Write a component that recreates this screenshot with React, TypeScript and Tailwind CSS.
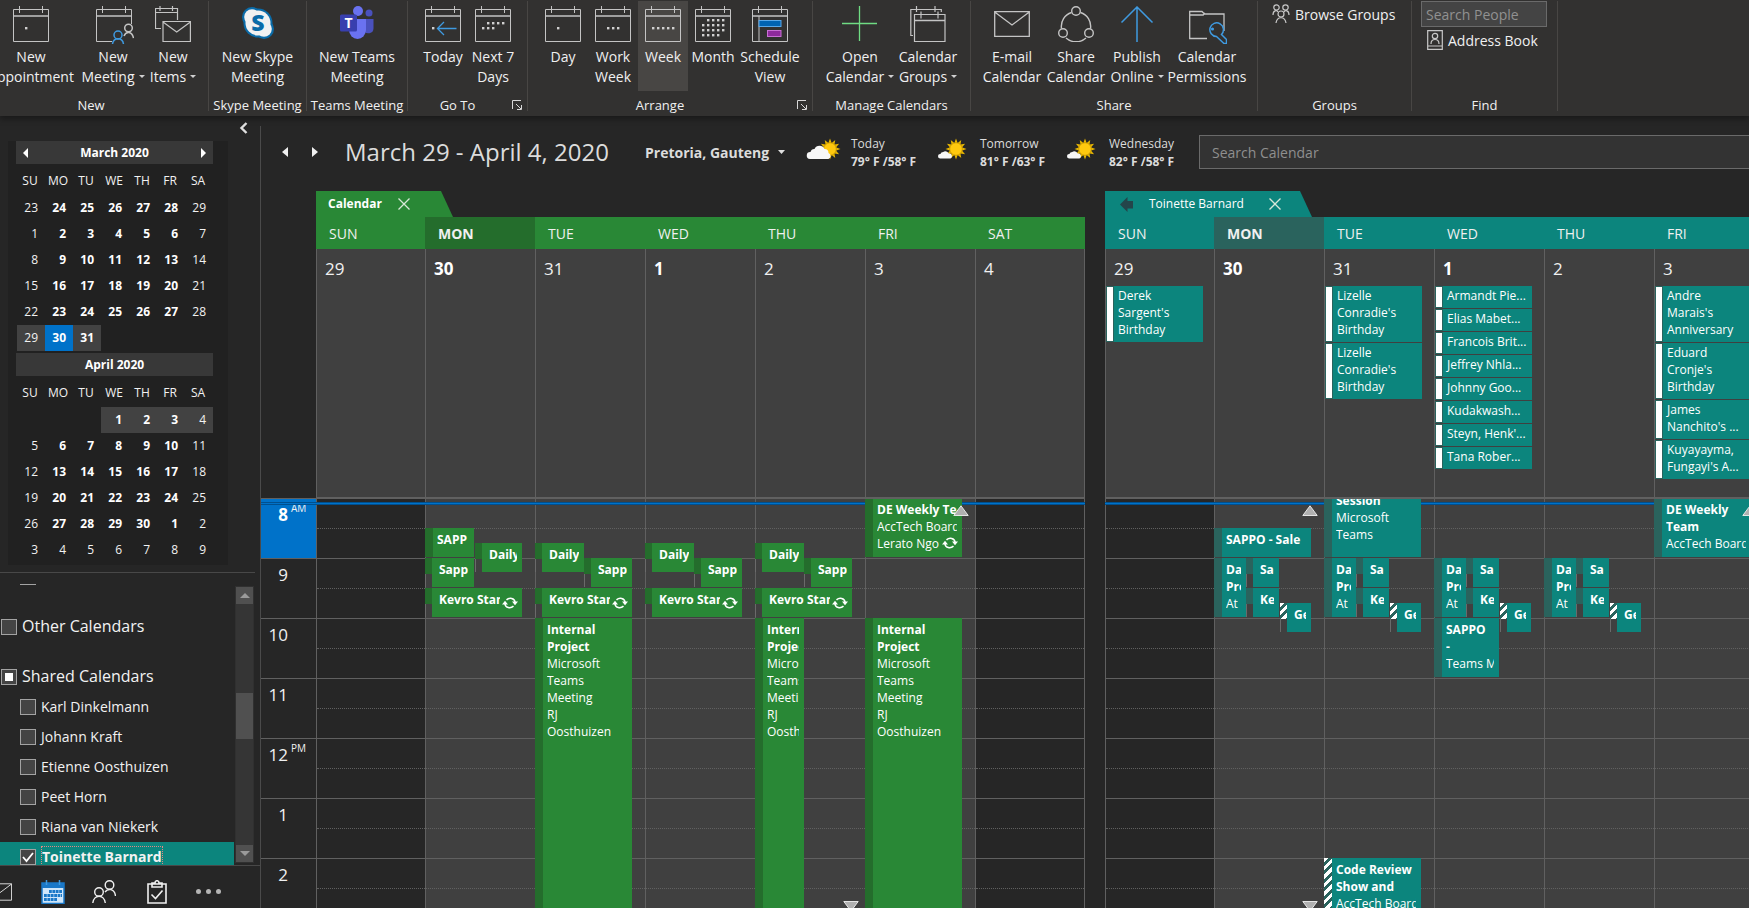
import { useState } from 'react'
import type { ReactNode } from 'react'
import clsx from 'clsx'

type Theme = 'green' | 'teal'

interface CalEvent {
  start: number
  length: number
  left?: number
  width?: number
  short?: boolean
  tentative?: boolean
  sync?: boolean
  bold: string[]
  text?: string[]
}

interface Day {
  name: string
  date: string
  today?: boolean
  strong?: boolean
  off?: boolean
  more?: 'up' | 'down' | 'both'
  allDay?: string[][]
  events?: CalEvent[]
}

const themes = {
  green: { bg: 'bg-[#298836]', dark: 'bg-[#246d2c]', fill: 'fill-[#298836]' },
  teal: { bg: 'bg-[#0c857d]', dark: 'bg-[#2a635d]', fill: 'fill-[#0c857d]' }
}

/* ---------- icons ---------- */

function Caret() {
  return (
    <svg viewBox="0 0 6 3" className="mb-[3px] ml-1 inline-block h-[3px] w-[6px] align-middle">
      <path d="M0 0h6L3 3z" fill="#d0d0d0" />
    </svg>
  )
}

function CalendarIcon({ dots = [], children }: { dots?: number[][]; children?: ReactNode }) {
  return (
    <svg viewBox="0 0 36 36" className="h-9 w-9" fill="none" stroke="#c4c4c4">
      <path d="M.5 3.5h35v32H.5zM6.5 0v7M29.5 0v7" />
      <path d="M.5 10h35" strokeWidth="1.5" />
      {dots.map(([x, y]) => (
        <rect key={`${x}-${y}`} x={x - 1} y={y - 1} width="2.4" height="2.4" fill="#d0d0d0" stroke="none" />
      ))}
      {children}
    </svg>
  )
}

function NewMeetingIcon() {
  return (
    <svg viewBox="0 0 38 38" className="-mr-1 h-[38px] w-[38px] shrink-0" fill="none" stroke="#c4c4c4">
      <path d="M35.5 18V3.5H.5v32H16M6.5 0v7M29.5 0v7" />
      <path d="M.5 10h35" strokeWidth="1.5" />
      <g strokeWidth="1.5">
        <circle cx="32.5" cy="22" r="3.8" />
        <path d="M28 30c2-5 8-5 9.5 2" />
        <g stroke="#3f9ae0">
          <circle cx="22" cy="29" r="4" />
          <path d="M16.5 38c1-7 10-7 11 0" />
        </g>
      </g>
    </svg>
  )
}

function NewItemsIcon() {
  return (
    <svg viewBox="0 0 36 36" className="h-9 w-9" fill="none" stroke="#c4c4c4" strokeWidth="1.2">
      <path d="M22.5 14V2.5H.5v20H6M.5 6.5h22M5 0v5M17.5 0v5" />
      <path d="M8 15.5h27.4v20H8zM8 16l13.7 10L35.4 16" />
    </svg>
  )
}

function SkypeIcon() {
  return (
    <svg viewBox="0 0 34 34" className="h-[34px] w-[34px]">
      <g fill="#0a6ba8">
        <circle cx="11" cy="11" r="10" />
        <circle cx="23" cy="23" r="10" />
        <circle cx="17" cy="17" r="14.5" />
      </g>
      <g fill="#f1f1f1">
        <circle cx="11" cy="11" r="7.8" />
        <circle cx="23" cy="23" r="7.8" />
        <circle cx="17" cy="17" r="12.5" />
      </g>
      <text x="17" y="25" textAnchor="middle" fontFamily="Open Sans, sans-serif" fontSize="23" fontWeight="800" fill="#0a6ba8">
        S
      </text>
    </svg>
  )
}

function TeamsIcon() {
  return (
    <svg viewBox="0 0 34 34" className="h-[34px] w-[34px]">
      <circle cx="29" cy="7" r="3.5" fill="#4a51bd" />
      <path d="M24 13h9.5v9.5a5 5 0 0 1-9.5 2z" fill="#4a51bd" />
      <circle cx="18" cy="5" r="5" fill="#6a72f0" />
      <path d="M9 13h17v11a8.5 9 0 0 1-17 0z" fill="#6a72f0" />
      <rect x="0" y="8.5" width="17" height="17" rx="1.5" fill="#383fae" />
      <text x="8.5" y="22" textAnchor="middle" fontFamily="Open Sans, sans-serif" fontSize="14" fontWeight="700" fill="#fff">
        T
      </text>
    </svg>
  )
}

function CalendarGroupsIcon() {
  return (
    <svg viewBox="0 0 36 36" className="h-9 w-9" fill="none" stroke="#c4c4c4" strokeWidth="1.2">
      <path d="M3 29.5H.8V3.5h30.5V6M6.5 0v6M25 0v6" />
      <path d="M4.5 8.5h30.5v27H4.5zM11 5.5v7M28 5.5v7" />
      <path d="M4.5 14.5h30.5" strokeWidth="1.5" />
    </svg>
  )
}

function ShareIcon() {
  return (
    <svg viewBox="0 0 36 36" className="h-9 w-9" fill="none" stroke="#c4c4c4" strokeWidth="1.4">
      <path d="M13.5 6.5a14.500 14.500 0 0 0-10 16M22.5 6.5a14.500 14.500 0 0 1 10 16M8 32a15 15 0 0 0 20 0" />
      <circle cx="18" cy="5" r="4.3" />
      <circle cx="5" cy="27" r="4.3" />
      <circle cx="31" cy="27" r="4.3" />
    </svg>
  )
}

function PermissionsIcon() {
  return (
    <svg viewBox="0 0 38 38" className="-mr-[2px] h-[38px] w-[38px] shrink-0" fill="none" stroke="#c4c4c4" strokeWidth="1.3">
      <path d="M18 32.5H.7v-27H13l2.5 2.5h19.5V25M.7 9h13.5L16 7" />
      <g stroke="#3f9ae0" strokeWidth="1.5">
        <path d="M27.5 30.5l7.5 7h2.5v-4l-5-5a6.800 6.800 0 1 0-5 2z" />
        <circle cx="23.5" cy="23" r=".8" fill="#3f9ae0" />
      </g>
    </svg>
  )
}

function MailIcon({ className = 'h-9 w-9' }: { className?: string }) {
  return (
    <svg viewBox="0 0 36 36" className={className} fill="none" stroke="currentColor" strokeWidth="1.3">
      <path d="M.7 5.7h34.6v24.6H.7zM.7 6L18 19 35.3 6" />
    </svg>
  )
}

function LauncherIcon() {
  return (
    <svg viewBox="0 0 10 10" className="h-[10px] w-[10px]" fill="none" stroke="#d8d8d8">
      <path d="M.5 9V.5H9M4 4l5 5M9.5 5v4.5H5" />
    </svg>
  )
}

function BrowseGroupsIcon() {
  return (
    <svg viewBox="0 0 18 20" className="h-5 w-[18px]" fill="none" stroke="#c8c8c8" strokeWidth="1.2">
      <circle cx="4.5" cy="3.5" r="2.7" />
      <circle cx="13.5" cy="3.5" r="2.7" />
      <circle cx="9" cy="10" r="3" />
      <path d="M1 11c0-5 4-5 5-3M17 11c0-5-4-5-5-3M4 19c1-7 9-7 10 0" />
    </svg>
  )
}

function AddressBookIcon() {
  return (
    <svg viewBox="0 0 16 20" className="h-5 w-4" fill="none" stroke="#c8c8c8" strokeWidth="1.2">
      <path d="M.7.7h14.6v18.6H.7zM.7 16h14.6" />
      <circle cx="8" cy="6" r="2.7" />
      <path d="M4 14c0-6 8-6 8 0" />
    </svg>
  )
}

function SyncIcon() {
  return (
    <svg viewBox="0 0 16 12" className="h-3 w-4" fill="none" stroke="#fff" strokeWidth="1.6">
      <path d="M4.5 2.8C7.500 .2 12.500 1 13 5M11.5 9.200C8.500 11.800 3.500 11 3 7" />
      <path d="M0 7.5h6L3 3.8zM16 4.5h-6l3 3.7z" fill="#fff" stroke="none" />
    </svg>
  )
}

function WeatherIcon({ cloudy }: { cloudy?: boolean }) {
  const cx = cloudy ? 24 : 21
  const rays = Array.from({ length: 12 }, (_, i) => i * 30)
  return (
    <svg viewBox="0 0 36 24" className="h-6 w-9">
      {rays.map((a) => (
        <path key={a} d={`M${cx - 2} 6L${cx} .5L${cx + 2} 6z`} fill="#e9b800" transform={`rotate(${a} ${cx} 11)`} />
      ))}
      <circle cx={cx} cy="11" r="6.3" fill="#ffc90e" stroke="#b98a00" strokeWidth=".7" />
      {cloudy ? (
        <path d="M4 21a3.500 3.500 0 0 1 .5-7 4 4 0 0 1 4-3 5.500 5.500 0 0 1 10 0 4 4 0 0 1 4 4 3.200 3.200 0 0 1 0 6z" fill="#f7f7f7" />
      ) : (
        <path d="M5 20.5a2.200 2.200 0 0 1 .4-4.400 3 3 0 0 1 2.800-2 3.600 3.600 0 0 1 5.500 1.500 2.500 2.500 0 0 1 1.300 4.900z" fill="#f7f7f7" />
      )}
    </svg>
  )
}

function MoreMarker({ dir }: { dir: 'up' | 'down' }) {
  return (
    <svg
      viewBox="0 0 16 11"
      className={clsx('absolute left-[87px] z-30 h-[11px] w-4', dir === 'up' ? 'top-[6px]' : '-bottom-1 rotate-180')}
    >
      <path d="M8 .8L15.2 10.5H.8z" fill="#b0b0b0" stroke="#f0f0f0" strokeWidth=".9" />
    </svg>
  )
}

/* ---------- ribbon ---------- */

function RibbonGroup({ label, width, launcher, children }: { label: string; width: string; launcher?: boolean; children: ReactNode }) {
  return (
    <section className={clsx('flex shrink-0', width)}>
      <div className="flex min-w-0 flex-1 flex-col pt-px">
        <div className="flex h-[90px]">{children}</div>
        <div className="mt-1 flex items-center text-[13px] leading-5">
          <span className="flex-1 whitespace-nowrap text-center">{label}</span>
          {launcher && (
            <button className="flex w-5 items-center justify-center" aria-label={`${label} options`}>
              <LauncherIcon />
            </button>
          )}
        </div>
      </div>
      <div className="mt-px h-[110px] w-px shrink-0 bg-[#484644]" />
    </section>
  )
}

function RibbonButton({ icon, lines, width, caret, active }: { icon: ReactNode; lines: string[]; width: string; caret?: boolean; active?: boolean }) {
  return (
    <button
      className={clsx(
        'flex h-[90px] shrink-0 flex-col items-center whitespace-nowrap pt-[5px] text-[14px] leading-5',
        width,
        active && 'bg-[#484644]'
      )}
    >
      <span className="flex h-9 items-start justify-center">{icon}</span>
      <span className="mt-[5px]">{lines[0]}</span>
      {lines[1] && (
        <span>
          {lines[1]}
          {caret && <Caret />}
        </span>
      )}
    </button>
  )
}

const row = (y: number, xs: number[]) => xs.map((x) => [x, y])

function Ribbon() {
  return (
    <header className="relative z-40 flex h-[116px] shrink-0 overflow-x-clip bg-[#323130] text-[#f0f0f0] shadow-[0_3px_6px_rgba(0,0,0,0.35)]">
      <RibbonGroup label="New" width="-ml-[26px] w-[235px]">
        <div className="flex pl-[13px]">
          <RibbonButton width="w-[88px]" icon={<CalendarIcon dots={row(22, [13])} />} lines={['New', 'Appointment']} />
          <RibbonButton width="ml-1 w-[68px]" icon={<NewMeetingIcon />} lines={['New', 'Meeting']} caret />
          <RibbonButton width="w-[52px]" icon={<NewItemsIcon />} lines={['New', 'Items']} caret />
        </div>
      </RibbonGroup>
      <RibbonGroup label="Skype Meeting" width="w-[98px]">
        <RibbonButton width="w-full" icon={<SkypeIcon />} lines={['New Skype', 'Meeting']} />
      </RibbonGroup>
      <RibbonGroup label="Teams Meeting" width="w-[101px]">
        <RibbonButton width="w-full" icon={<TeamsIcon />} lines={['New Teams', 'Meeting']} />
      </RibbonGroup>
      <RibbonGroup label="Go To" width="w-[120px]" launcher>
        <div className="flex pl-[10px]">
          <RibbonButton
            width="w-[50px]"
            icon={
              <CalendarIcon dots={row(22, [8])}>
                <path d="M31.5 22.5h-19M19 16l-6.5 6.500L19 29" stroke="#3f9ae0" strokeWidth="1.3" />
              </CalendarIcon>
            }
            lines={['Today']}
          />
          <RibbonButton width="w-[50px]" icon={<CalendarIcon dots={[...row(17, [13, 18, 23, 28]), ...row(22, [8, 13, 18])]} />} lines={['Next 7', 'Days']} />
        </div>
      </RibbonGroup>
      <RibbonGroup label="Arrange" width="w-[285px]" launcher>
        <div className="flex pl-[10px]">
          <RibbonButton width="w-[50px]" icon={<CalendarIcon dots={row(22, [13])} />} lines={['Day']} />
          <RibbonButton width="w-[50px]" icon={<CalendarIcon dots={row(22, [13, 18, 23])} />} lines={['Work', 'Week']} />
          <RibbonButton width="w-[50px]" icon={<CalendarIcon dots={row(22, [8, 13, 18, 23, 28])} />} lines={['Week']} active />
          <RibbonButton
            width="w-[50px]"
            icon={
              <CalendarIcon
                dots={[
                  ...row(14, [13, 18, 23, 28]),
                  ...row(19, [8, 13, 18, 23, 28]),
                  ...row(24, [8, 13, 18, 23, 28]),
                  ...row(29, [8, 13, 18, 23])
                ]}
              />
            }
            lines={['Month']}
          />
          <RibbonButton
            width="w-[64px]"
            icon={
              <CalendarIcon>
                <path d="M7 10v25.5" />
                <rect x="7" y="14.5" width="22" height="6" fill="#0063b1" stroke="#59a8e8" />
                <rect x="15.5" y="24.5" width="13.5" height="6" fill="#8e2a9c" stroke="#c86fd4" />
              </CalendarIcon>
            }
            lines={['Schedule', 'View']}
          />
        </div>
      </RibbonGroup>
      <RibbonGroup label="Manage Calendars" width="w-[158px]">
        <div className="flex pl-[9px]">
          <RibbonButton
            width="w-[76px]"
            icon={
              <svg viewBox="0 0 36 36" className="h-9 w-9" stroke="#6fdc83" strokeWidth="1.3">
                <path d="M17.5 0v35M0 17.5h35" />
              </svg>
            }
            lines={['Open', 'Calendar']}
            caret
          />
          <RibbonButton width="w-[60px]" icon={<CalendarGroupsIcon />} lines={['Calendar', 'Groups']} caret />
        </div>
      </RibbonGroup>
      <RibbonGroup label="Share" width="w-[287px]">
        <div className="flex pl-[9px]">
          <RibbonButton width="w-[64px]" icon={<MailIcon className="h-9 w-9 text-[#c4c4c4]" />} lines={['E-mail', 'Calendar']} />
          <RibbonButton width="w-[64px]" icon={<ShareIcon />} lines={['Share', 'Calendar']} />
          <RibbonButton
            width="w-[58px]"
            icon={
              <svg viewBox="0 0 36 36" className="h-9 w-9" fill="none" stroke="#3f9ae0" strokeWidth="1.5">
                <path d="M18 36V1M2.5 16.5L18 1l15.5 15.5" />
              </svg>
            }
            lines={['Publish', 'Online']}
            caret
          />
          <RibbonButton width="w-[82px]" icon={<PermissionsIcon />} lines={['Calendar', 'Permissions']} />
        </div>
      </RibbonGroup>
      <RibbonGroup label="Groups" width="w-[154px]">
        <button className="ml-[14px] mt-[3px] flex h-5 items-center gap-[5px] whitespace-nowrap text-[14px]">
          <BrowseGroupsIcon />
          Browse Groups
        </button>
      </RibbonGroup>
      <RibbonGroup label="Find" width="w-[146px]">
        <div className="flex flex-col pl-[9px]">
          <input
            type="text"
            aria-label="Search People"
            placeholder="Search People"
            className="h-[26px] w-[126px] border border-[#6a6a6a] bg-[#444444] px-1 text-[14px] placeholder:text-[#919191]"
          />
          <button className="ml-[6px] mt-[3px] flex h-5 items-center gap-[5px] whitespace-nowrap text-[14px]">
            <AddressBookIcon />
            Address Book
          </button>
        </div>
      </RibbonGroup>
    </header>
  )
}

/* ---------- left pane ---------- */

const weekdays = ['SU', 'MO', 'TU', 'WE', 'TH', 'FR', 'SA']

const march = [
  [23, 24, 25, 26, 27, 28, 29],
  [1, 2, 3, 4, 5, 6, 7],
  [8, 9, 10, 11, 12, 13, 14],
  [15, 16, 17, 18, 19, 20, 21],
  [22, 23, 24, 25, 26, 27, 28],
  [29, 30, 31, 0, 0, 0, 0]
]

const april = [
  [0, 0, 0, 1, 2, 3, 4],
  [5, 6, 7, 8, 9, 10, 11],
  [12, 13, 14, 15, 16, 17, 18],
  [19, 20, 21, 22, 23, 24, 25],
  [26, 27, 28, 29, 30, 1, 2],
  [3, 4, 5, 6, 7, 8, 9]
]

function MiniMonth({ title, weeks, selectedWeek, today, lightWeek, nav }: { title: string; weeks: number[][]; selectedWeek: number; today?: number; lightWeek?: number; nav?: boolean }) {
  return (
    <div className="w-[197px] text-[12px] text-[#f2f2f2]">
      <div className="flex h-[23px] items-center justify-between bg-[#383838] px-[7px] text-white">
        {nav ? (
          <button aria-label="Previous month">
            <svg viewBox="0 0 5 10" className="h-[10px] w-[5px]" fill="#fff"><path d="M5 0v10L0 5z" /></svg>
          </button>
        ) : <span />}
        <span className="font-bold">{title}</span>
        {nav ? (
          <button aria-label="Next month">
            <svg viewBox="0 0 5 10" className="h-[10px] w-[5px]" fill="#fff"><path d="M0 0v10l5-5z" /></svg>
          </button>
        ) : <span />}
      </div>
      <table className="ml-px w-[196px] table-fixed border-collapse">
        <thead>
          <tr className="h-[31px]">
            {weekdays.map((d) => (
              <th key={d} className="p-0 pr-[2px] pt-[3px] text-center text-[12px] font-normal">{d}</th>
            ))}
          </tr>
        </thead>
        <tbody>
          {weeks.map((week, w) => (
            <tr key={w} className="h-[26px]">
              {week.map((d, i) => (
                <td
                  key={i}
                  className={clsx(
                    'p-0 pr-[7px] text-right leading-none',
                    i > 0 && i < 6 && w !== lightWeek && 'font-bold text-white',
                    d > 0 && w === selectedWeek && (d === today ? 'bg-[#0072c9]' : 'bg-[#424242]')
                  )}
                >
                  {d || ''}
                </td>
              ))}
            </tr>
          ))}
        </tbody>
      </table>
    </div>
  )
}

function Checkbox({ id, state, onChange }: { id: string; state?: 'on' | 'mixed' | 'off'; onChange?: () => void }) {
  return (
    <span className="relative h-4 w-4 shrink-0">
      <input
        id={id}
        type="checkbox"
        checked={state === 'on'}
        onChange={onChange ?? (() => {})}
        className="block h-4 w-4 appearance-none border border-[#a3a3a3] bg-[#444444]"
      />
      {state === 'mixed' && <span className="pointer-events-none absolute left-1 top-1 h-2 w-2 bg-white" />}
      {state === 'on' && (
        <svg viewBox="0 0 16 16" className="pointer-events-none absolute left-0 top-0 h-4 w-4" fill="none" stroke="#fff" strokeWidth="1.8">
          <path d="M3 8l3.500 4L13 4" />
        </svg>
      )}
    </span>
  )
}

const people = ['Karl Dinkelmann', 'Johann Kraft', 'Etienne Oosthuizen', 'Peet Horn', 'Riana van Niekerk', 'Toinette Barnard']

function CalendarList() {
  const [checked, setChecked] = useState<string[]>(['Toinette Barnard'])
  const toggle = (name: string) =>
    setChecked((list) => (list.includes(name) ? list.filter((n) => n !== name) : [...list, name]))

  return (
    <div className="mt-[11px] flex min-h-0 flex-1">
      <div className="w-[234px] overflow-hidden text-[#f2f2f2]">
        <div className="-mt-[22px] flex h-[30px] items-center pl-5">
          <Checkbox id="previous" />
          <label htmlFor="previous" className="sr-only">Calendar</label>
        </div>
        <div className="mt-5 flex h-[30px] items-center gap-[5px] pl-px">
          <Checkbox id="other" />
          <label htmlFor="other" className="pb-[2px] text-[16px]">Other Calendars</label>
        </div>
        <div className="mt-5 flex h-[30px] items-center gap-[5px] pl-px">
          <Checkbox id="shared" state="mixed" />
          <label htmlFor="shared" className="pb-[2px] text-[16px]">Shared Calendars</label>
        </div>
        {people.map((name) => {
          const on = checked.includes(name)
          const id = name.replace(/ /g, '-')
          return (
            <div key={name} className={clsx('flex h-[30px] items-center gap-[5px] pl-5 text-[14px]', on && 'bg-[#0c857d]')}>
              <Checkbox id={id} state={on ? 'on' : 'off'} onChange={() => toggle(name)} />
              <label htmlFor={id} className={clsx('leading-5', on && 'border border-dotted border-[#e08a84] font-bold')}>
                {name}
              </label>
            </div>
          )
        })}
      </div>
      <div className="mb-[2px] ml-px mt-[2px] flex w-[19px] flex-col border border-[#303030] bg-[#353535]">
        <button className="flex h-[17px] items-center justify-center bg-[#505050]" aria-label="Scroll up">
          <svg viewBox="0 0 10 5" className="h-[5px] w-[10px]" fill="#9a9a9a"><path d="M5 0l5 5H0z" /></svg>
        </button>
        <div className="mt-[89px] h-[46px] bg-[#505050]" />
        <button className="mt-auto flex h-[17px] items-center justify-center bg-[#505050]" aria-label="Scroll down">
          <svg viewBox="0 0 10 5" className="h-[5px] w-[10px]" fill="#9a9a9a"><path d="M0 0h10L5 5z" /></svg>
        </button>
      </div>
    </div>
  )
}

function NavBar() {
  return (
    <nav className="flex h-[43px] shrink-0 items-center border-t border-[#484848] pt-[9px] text-[#f0f0f0]">
      <button className="-ml-3" aria-label="Mail">
        <MailIcon className="h-6 w-6" />
      </button>
      <button className="ml-[29px]" aria-label="Calendar">
        <svg viewBox="0 0 24 24" className="h-6 w-6">
          <path d="M1 3h22v20.500H1z" fill="#cfe6fa" stroke="#1a78c8" strokeWidth="1.5" />
          <path d="M1 3h22v5H1z" fill="#1a78c8" />
          <path d="M5.5 0v5M18.5 0v5" stroke="#3f9ae0" strokeWidth="1.5" />
          <path d="M8 11.5h13M3 15.5h18M3 19.5h13" stroke="#1a78c8" strokeWidth="3" strokeDasharray="2.8 .6" />
        </svg>
      </button>
      <button className="ml-[27px]" aria-label="People">
        <svg viewBox="0 0 24 24" className="h-6 w-6" fill="none" stroke="currentColor" strokeWidth="1.4">
          <circle cx="17.5" cy="5" r="4.3" />
          <circle cx="7" cy="12" r="4.3" />
          <path d="M.8 23c1-9 11.500-9 12.500 0M13 12c3-4 9.500-3.500 10.500 4" />
        </svg>
      </button>
      <button className="ml-[31px]" aria-label="Tasks">
        <svg viewBox="0 0 20 24" className="h-6 w-5" fill="none" stroke="currentColor" strokeWidth="1.6">
          <path d="M1 4h18v19H1zM5 7V3h3c0-3 4-3 4 0h3v4z" />
          <path d="M4.5 14.5l4 4 7-8" />
        </svg>
      </button>
      <button className="ml-[29px] flex gap-[5px]" aria-label="More">
        <i className="h-[5px] w-[5px] rounded-full bg-[#b5b5b5]" />
        <i className="h-[5px] w-[5px] rounded-full bg-[#b5b5b5]" />
        <i className="h-[5px] w-[5px] rounded-full bg-[#b5b5b5]" />
      </button>
    </nav>
  )
}

function Sidebar() {
  return (
    <aside className="flex w-[260px] shrink-0 flex-col">
      <div className="flex h-[25px] items-center justify-end pb-[2px] pr-3">
        <button aria-label="Collapse pane">
          <svg viewBox="0 0 9 12" className="h-3 w-[9px]" fill="none" stroke="#e0e0e0" strokeWidth="2.4">
            <path d="M7.5 1L2.5 6l5 5" />
          </svg>
        </button>
      </div>
      <div className="ml-2 w-[220px] space-y-[2px] bg-[#212121] pb-[2px] pl-2">
        <MiniMonth title="March 2020" weeks={march} selectedWeek={5} today={30} nav />
        <MiniMonth title="April 2020" weeks={april} selectedWeek={0} lightWeek={5} />
      </div>
      <div className="mt-[7px] h-px w-[255px] shrink-0 bg-[#484848]" />
      <CalendarList />
      <NavBar />
    </aside>
  )
}

/* ---------- week view ---------- */

const daily: CalEvent = { start: 44, length: 29, width: 49, short: true, bold: ['Daily'] }
const sapp: CalEvent = { start: 59, length: 29, left: 49, width: 48, short: true, bold: ['Sapp'] }
const kevro: CalEvent = { start: 89, length: 29, short: true, sync: true, bold: ['Kevro Stan'] }
const project: CalEvent = {
  start: 119,
  length: 480,
  bold: ['Internal', 'Project'],
  text: ['Microsoft', 'Teams', 'Meeting', 'RJ', 'Oosthuizen']
}

const morning: CalEvent[] = [
  { start: 59, length: 59, width: 32, bold: ['Da', 'Pro'], text: ['At'] },
  { start: 59, length: 29, left: 32, width: 33, short: true, bold: ['Sa'] },
  { start: 89, length: 29, left: 32, width: 33, short: true, bold: ['Ke'] },
  { start: 104, length: 29, left: 66, width: 31, short: true, tentative: true, bold: ['Ge'] }
]

const myWeek: Day[] = [
  { name: 'SUN', date: '29', off: true },
  {
    name: 'MON',
    date: '30',
    today: true,
    strong: true,
    events: [
      { start: 29, length: 29, width: 49, bold: ['SAPP'] },
      { ...daily, left: 50, width: 47 },
      { ...sapp, left: 0, width: 49 },
      kevro
    ]
  },
  { name: 'TUE', date: '31', events: [daily, sapp, kevro, project] },
  { name: 'WED', date: '1', strong: true, events: [daily, sapp, kevro] },
  { name: 'THU', date: '2', more: 'down', events: [daily, sapp, kevro, { ...project, width: 49 }] },
  {
    name: 'FRI',
    date: '3',
    more: 'up',
    events: [{ start: -1, length: 59, sync: true, bold: ['DE Weekly Te'], text: ['AccTech Board', 'Lerato Ngo'] }, project]
  },
  { name: 'SAT', date: '4', off: true }
]

const sharedWeek: Day[] = [
  { name: 'SUN', date: '29', off: true, allDay: [['Derek', "Sargent's", 'Birthday']] },
  {
    name: 'MON',
    date: '30',
    today: true,
    strong: true,
    more: 'both',
    events: [{ start: 29, length: 29, bold: ['SAPPO - Sale'] }, ...morning]
  },
  {
    name: 'TUE',
    date: '31',
    allDay: [['Lizelle', "Conradie's", 'Birthday'], ['Lizelle', "Conradie's", 'Birthday']],
    events: [
      { start: -10, length: 68, bold: ['Session'], text: ['Microsoft', 'Teams'] },
      ...morning,
      { start: 359, length: 60, tentative: true, bold: ['Code Review', 'Show and'], text: ['AccTech Board'] }
    ]
  },
  {
    name: 'WED',
    date: '1',
    strong: true,
    allDay: [
      ['Armandt Pie...'],
      ['Elias Mabet...'],
      ['Francois Brit...'],
      ['Jeffrey Nhla...'],
      ['Johnny Goo...'],
      ['Kudakwash...'],
      ["Steyn, Henk'..."],
      ['Tana Rober...']
    ],
    events: [...morning, { start: 119, length: 59, width: 65, bold: ['SAPPO', '-'], text: ['Teams M'] }]
  },
  { name: 'THU', date: '2', events: morning },
  {
    name: 'FRI',
    date: '3',
    more: 'up',
    allDay: [
      ['Andre', "Marais's", 'Anniversary'],
      ['Eduard', "Cronje's", 'Birthday'],
      ['James', "Nanchito's ..."],
      ['Kuyayayma,', "Fungayi's A..."]
    ],
    events: [{ start: -1, length: 59, bold: ['DE Weekly', 'Team'], text: ['AccTech Board'] }]
  },
  { name: 'SAT', date: '4', off: true }
]

const hours = ['8', '9', '10', '11', '12', '1', '2']
const columns = 'grid grid-cols-[109px_repeat(6,110px)]'

// one minute of the day is one pixel
function EventBlock({ event, theme }: { event: CalEvent; theme: Theme }) {
  const { start, length, left = 0, width = 97, short, tentative, sync, bold, text = [] } = event
  const t = themes[theme]
  return (
    <div className="absolute z-20 -ml-px flex" style={{ top: start, height: length, left, width }}>
      <div className={clsx('shrink-0', short ? 'w-[7px] border-l border-[#6a6a6a]' : 'w-2')}>
        <div
          className={clsx(
            short ? '-ml-px h-4 w-2' : 'h-full w-full',
            tentative ? 'bg-[repeating-linear-gradient(135deg,#ffffff_0_3px,#2a635d_3px_6px)]' : t.dark
          )}
        />
      </div>
      <div className={clsx('relative min-w-0 flex-1 pr-[5px] pt-[3px] text-[12px] leading-[17px] text-white', short ? 'pl-[7px]' : 'pl-1', t.bg)}>
        <div className="h-full overflow-hidden whitespace-nowrap">
          {bold.map((line) => <p key={line} className="font-bold">{line}</p>)}
          {text.map((line) => <p key={line}>{line}</p>)}
        </div>
        {sync && (
          <span className={clsx('absolute bottom-2 right-1 pl-[2px]', t.bg)}>
            <SyncIcon />
          </span>
        )}
      </div>
    </div>
  )
}

function WeekCalendar({ name, theme, days, shared }: { name: string; theme: Theme; days: Day[]; shared?: boolean }) {
  const t = themes[theme]
  return (
    <section className="flex w-[769px] shrink-0 flex-col">
      <div className="flex h-[26px] shrink-0">
        <div className={clsx('flex items-center text-[12px] text-white', t.bg, shared ? 'w-[195px] pl-[15px]' : 'w-[125px] pl-3')}>
          {shared && (
            <button className="mr-4" aria-label="Overlay calendar">
              <svg viewBox="0 0 13 15" className="h-[15px] w-[13px]"><path d="M0 7.500L7.500 0v4H13v7.500H7.500V15z" fill="#24454a" /></svg>
            </button>
          )}
          <span className={clsx('whitespace-nowrap pb-px', shared ? 'w-[120px]' : 'w-[70px] font-bold')}>{name}</span>
          <button aria-label={`Close ${name}`}>
            <svg viewBox="0 0 12 12" className="h-3 w-3" stroke="#d8e8d8" strokeWidth="1.3"><path d="M.5.5l11 11M11.5.5l-11 11" /></svg>
          </button>
        </div>
        <svg viewBox="0 0 12 26" className={clsx('h-[26px] w-3', t.fill)}><path d="M0 0l12 26H0z" /></svg>
      </div>
      <div className={clsx('h-8 shrink-0 text-[14px] text-[#f0f0f0]', columns, t.bg)}>
        {days.map((d) => (
          <div key={d.name} className={clsx('flex items-center pl-[13px]', d.today && ['font-bold', t.dark])}>{d.name}</div>
        ))}
      </div>
      <div className={clsx('h-[250px] shrink-0 border-b-2 border-[#606060] bg-[#404040]', columns)}>
        {days.map((d) => (
          <div key={d.name} className="border-l border-[#606060] last:border-r">
            <p className={clsx('h-[37px] pl-2 pt-[8px] text-[17px] leading-6 text-[#f0f0f0]', d.strong && 'font-bold text-white')}>{d.date}</p>
            <div className="w-[97px] space-y-px">
              {d.allDay?.map((lines, i) => (
                <div key={i} className={clsx('flex pt-px text-[12px] leading-[17px] text-white', t.bg)}>
                  <span className="-mt-px mr-1 w-2 shrink-0 border border-[#2a635d] bg-white" />
                  <div className="whitespace-nowrap pb-1">
                    {lines.map((line) => <p key={line}>{line}</p>)}
                  </div>
                </div>
              ))}
            </div>
          </div>
        ))}
      </div>
      <div className={clsx('relative min-h-0 flex-1 grid-rows-[minmax(0,1fr)] overflow-hidden', columns)}>
        <div className="absolute inset-x-0 top-[3px] z-10 h-[3px] border-y border-[#00508f] bg-[#0072c9]" />
        {days.map((d) => (
          <div key={d.name} className={clsx('relative border-l border-[#606060] last:border-r', d.off ? 'bg-[#262626]' : 'bg-[#404040]')}>
            {hours.map((h) => (
              <div key={h} className="h-[60px] border-b border-[#606060]">
                <div className="h-[30px] border-b border-dotted border-[#606060]" />
              </div>
            ))}
            {d.events?.map((event, i) => <EventBlock key={i} event={event} theme={theme} />)}
            {(d.more === 'up' || d.more === 'both') && <MoreMarker dir="up" />}
            {(d.more === 'down' || d.more === 'both') && <MoreMarker dir="down" />}
          </div>
        ))}
      </div>
    </section>
  )
}

function HourColumn() {
  return (
    <div className="flex w-[55px] shrink-0 flex-col overflow-hidden text-[#f0f0f0]">
      <div className="h-[308px] shrink-0 border-b border-[#606060]" />
      <div className="relative min-h-0 flex-1">
        <div className="absolute inset-x-0 top-[3px] z-10 h-[3px] border-y border-[#00508f] bg-[#0072c9]" />
        {hours.map((h, i) => (
          <div key={h} className={clsx('flex h-[60px] border-b border-[#606060]', i === 0 && 'bg-[#0072c9]')}>
            <span className={clsx('w-[27px] pt-1 text-right text-[17px] leading-6', i === 0 && 'font-bold text-white')}>{h}</span>
            {(h === '8' || h === '12') && <span className="pl-[3px] pt-[3px] text-[10px] leading-3">{i === 0 ? 'AM' : 'PM'}</span>}
          </div>
        ))}
      </div>
    </div>
  )
}

const forecast = [
  { day: 'Today', temp: '79° F /58° F', cloudy: true },
  { day: 'Tomorrow', temp: '81° F /63° F' },
  { day: 'Wednesday', temp: '82° F /58° F' }
]

function Toolbar() {
  return (
    <div className="mb-[3px] flex h-[72px] shrink-0 items-center pl-[9px] text-[#dcdcdc]">
      <button className="flex w-[30px] justify-center" aria-label="Back">
        <svg viewBox="0 0 6 10" className="h-[10px] w-[6px]" fill="#f0f0f0"><path d="M6 0v10L0 5z" /></svg>
      </button>
      <button className="flex w-[30px] justify-center" aria-label="Forward">
        <svg viewBox="0 0 6 10" className="h-[10px] w-[6px]" fill="#f0f0f0"><path d="M0 0v10l6-5z" /></svg>
      </button>
      <h1 className="ml-[15px] w-[300px] shrink-0 whitespace-nowrap text-2xl">March 29 - April 4, 2020</h1>
      <div className="relative flex w-[161px] shrink-0 items-center">
        <select aria-label="Weather location" className="w-[142px] appearance-none bg-[#262626] text-[14px] font-bold">
          <option>Pretoria, Gauteng</option>
        </select>
        <svg viewBox="0 0 7 4" className="pointer-events-none absolute left-[133px] h-1 w-[7px]" fill="#e0e0e0"><path d="M0 0h7L3.5 4z" /></svg>
      </div>
      {forecast.map((f) => (
        <div key={f.day} className="flex w-[129px] shrink-0 items-center text-[12px] leading-[18px]">
          <div className="w-[45px] pb-1"><WeatherIcon cloudy={f.cloudy} /></div>
          <div className="whitespace-nowrap pt-[2px]">
            <p>{f.day}</p>
            <p className="font-bold">{f.temp}</p>
          </div>
        </div>
      ))}
      <input
        type="search"
        aria-label="Search Calendar"
        placeholder="Search Calendar"
        className="-mr-px ml-[6px] h-[34px] min-w-0 flex-1 border border-[#6a6a6a] bg-[#333333] px-3 text-[14px] placeholder:text-[#8f8f8f]"
      />
    </div>
  )
}

export default function App() {
  return (
    <div className="flex h-screen flex-col overflow-hidden bg-[#262626] font-['Open_Sans','Noto_Sans',sans-serif]">
      <Ribbon />
      <div className="flex min-h-0 flex-1">
        <Sidebar />
        <div className="mt-[10px] w-px shrink-0 bg-[#4a4a4a]" />
        <main className="flex min-w-0 flex-1 flex-col">
          <Toolbar />
          <div className="flex min-h-0 flex-1 overflow-hidden">
            <HourColumn />
            <WeekCalendar name="Calendar" theme="green" days={myWeek} />
            <div className="w-5 shrink-0" />
            <WeekCalendar name="Toinette Barnard" theme="teal" days={sharedWeek} shared />
          </div>
        </main>
      </div>
    </div>
  )
}
